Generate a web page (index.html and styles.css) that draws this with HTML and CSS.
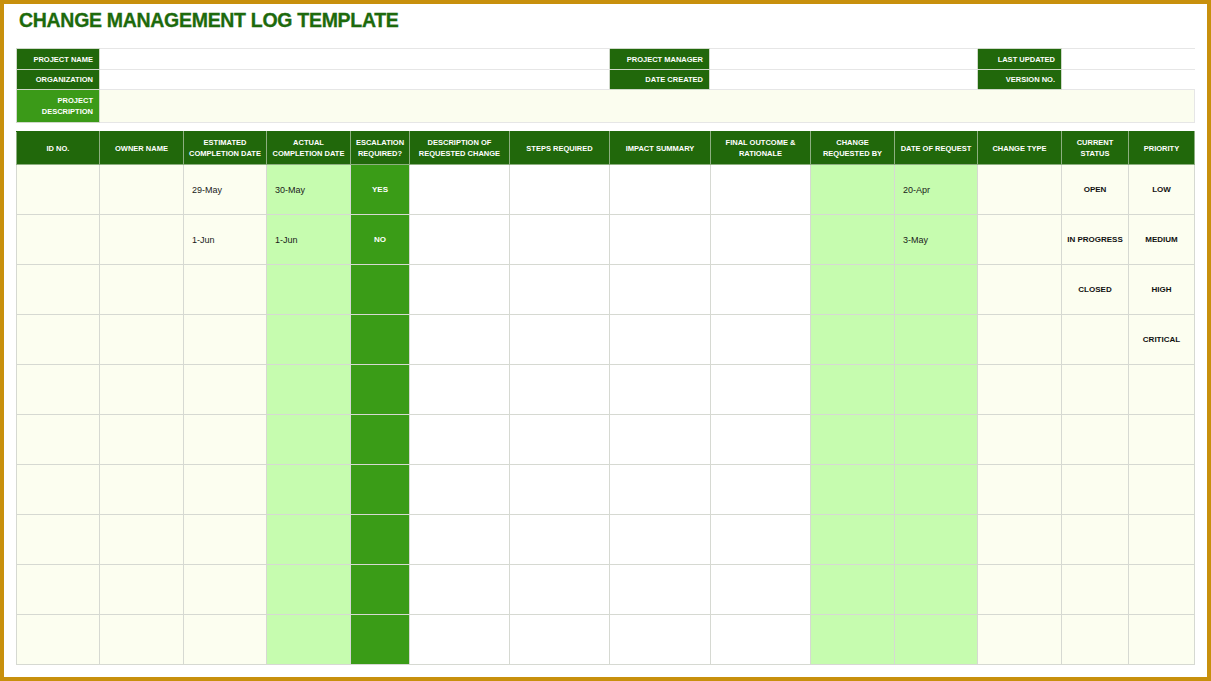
FILE: index.html
```html
<!DOCTYPE html>
<html>
<head>
<meta charset="utf-8">
<link rel="stylesheet" href="styles.css">
</head>
<body>
<div class="page">
  <h1 class="title">CHANGE MANAGEMENT LOG TEMPLATE</h1>

  <table class="info">
    <colgroup>
      <col class="w83"><col class="w510"><col class="w100"><col class="w268"><col class="w84"><col class="w133">
    </colgroup>
    <tr class="r1">
      <th>PROJECT NAME</th><td></td>
      <th>PROJECT MANAGER</th><td></td>
      <th>LAST UPDATED</th><td></td>
    </tr>
    <tr class="r2">
      <th>ORGANIZATION</th><td></td>
      <th>DATE CREATED</th><td></td>
      <th>VERSION NO.</th><td></td>
    </tr>
    <tr class="r3">
      <th class="light">PROJECT<br>DESCRIPTION</th><td colspan="5" class="cream"></td>
    </tr>
  </table>

  <table class="log">
    <colgroup>
      <col class="cream w83">
      <col class="cream w84">
      <col class="cream w83">
      <col class="lgreen w84">
      <col class="green w59">
      <col class="white w100">
      <col class="white w100">
      <col class="white w101">
      <col class="white w100">
      <col class="lgreen w84">
      <col class="lgreen w83">
      <col class="cream w84">
      <col class="cream w67">
      <col class="cream w66">
    </colgroup>
    <thead>
      <tr>
        <th>ID NO.</th>
        <th>OWNER NAME</th>
        <th>ESTIMATED<br>COMPLETION DATE</th>
        <th>ACTUAL<br>COMPLETION DATE</th>
        <th>ESCALATION<br>REQUIRED?</th>
        <th>DESCRIPTION OF<br>REQUESTED CHANGE</th>
        <th>STEPS REQUIRED</th>
        <th>IMPACT SUMMARY</th>
        <th>FINAL OUTCOME &amp;<br>RATIONALE</th>
        <th>CHANGE<br>REQUESTED BY</th>
        <th>DATE OF REQUEST</th>
        <th>CHANGE TYPE</th>
        <th>CURRENT<br>STATUS</th>
        <th>PRIORITY</th>
      </tr>
    </thead>
    <tbody>
      <tr>
        <td></td><td></td><td class="date">29-May</td><td class="date">30-May</td><td class="esc">YES</td>
        <td></td><td></td><td></td><td></td><td></td><td class="date">20-Apr</td><td></td>
        <td class="bold">OPEN</td><td class="bold">LOW</td>
      </tr>
      <tr>
        <td></td><td></td><td class="date">1-Jun</td><td class="date">1-Jun</td><td class="esc">NO</td>
        <td></td><td></td><td></td><td></td><td></td><td class="date">3-May</td><td></td>
        <td class="bold">IN PROGRESS</td><td class="bold">MEDIUM</td>
      </tr>
      <tr>
        <td></td><td></td><td></td><td></td><td></td><td></td><td></td><td></td><td></td><td></td><td></td><td></td>
        <td class="bold">CLOSED</td><td class="bold">HIGH</td>
      </tr>
      <tr>
        <td></td><td></td><td></td><td></td><td></td><td></td><td></td><td></td><td></td><td></td><td></td><td></td>
        <td></td><td class="bold">CRITICAL</td>
      </tr>
      <tr><td></td><td></td><td></td><td></td><td></td><td></td><td></td><td></td><td></td><td></td><td></td><td></td><td></td><td></td></tr>
      <tr><td></td><td></td><td></td><td></td><td></td><td></td><td></td><td></td><td></td><td></td><td></td><td></td><td></td><td></td></tr>
      <tr><td></td><td></td><td></td><td></td><td></td><td></td><td></td><td></td><td></td><td></td><td></td><td></td><td></td><td></td></tr>
      <tr><td></td><td></td><td></td><td></td><td></td><td></td><td></td><td></td><td></td><td></td><td></td><td></td><td></td><td></td></tr>
      <tr><td></td><td></td><td></td><td></td><td></td><td></td><td></td><td></td><td></td><td></td><td></td><td></td><td></td><td></td></tr>
      <tr><td></td><td></td><td></td><td></td><td></td><td></td><td></td><td></td><td></td><td></td><td></td><td></td><td></td><td></td></tr>
    </tbody>
  </table>
</div>
</body>
</html>
```

FILE: styles.css
```css
html, body {
  margin: 0;
  padding: 0;
  background: #ffffff;
}

.page {
  box-sizing: border-box;
  width: 1211px;
  height: 681px;
  border: 4px solid #c8900d;
  padding: 4px 13px 0 12px;
  background: #ffffff;
  font-family: "Liberation Sans", Arial, sans-serif;
  overflow: hidden;
}

.title {
  margin: 0 0 16px 3px;
  height: 24px;
  font-size: 19.5px;
  line-height: 24px;
  font-weight: bold;
  color: #1d6a0c;
  letter-spacing: -0.3px;
  -webkit-text-stroke: 0.3px #1d6a0c;
}

table {
  border-collapse: collapse;
  table-layout: fixed;
  width: 1178px;
}

.w59 { width: 59px; }
.w66 { width: 66px; }
.w67 { width: 67px; }
.w83 { width: 83px; }
.w84 { width: 84px; }
.w100 { width: 100px; }
.w101 { width: 101px; }
.w133 { width: 133px; }
.w268 { width: 268px; }
.w510 { width: 510px; }

.info th {
  background: #21680b;
  color: #ffffff;
  font-size: 7.5px;
  font-weight: bold;
  text-align: right;
  padding: 0 6px 0 0;
  border: 1px solid #cfd8c9;
  line-height: 11px;
}

.info td {
  border: 1px solid #e6e6e6;
  border-left: none;
  border-right: none;
  padding: 0;
}

.info .r1 { height: 21px; }
.info .r2 { height: 20px; }
.info .r3 { height: 33px; }
.info .r3 td { border-top: 1px solid #cfcfcf; border-right: 1px solid #e6e6e6; }
.info th.light { background: #3b9a18; }
.info td.cream { background: #fbfdef; }

.log {
  margin-top: 8px;
}

col.cream { background: #fcfef0; }
col.lgreen { background: #c6fcaf; }
col.green { background: #3a9c17; }
col.white { background: #ffffff; }

.log thead tr { height: 33px; }

.log thead th {
  background: #21680b;
  color: #ffffff;
  font-size: 7.5px;
  font-weight: bold;
  line-height: 11px;
  text-align: center;
  padding: 0 2px;
  border: 1px solid #8daf80;
  border-top-color: #21680b;
}

.log tbody tr { height: 50px; }

.log tbody td {
  border: 1px solid #d6d9d2;
  padding: 0;
  font-size: 9px;
  color: #1a1a1a;
  vertical-align: middle;
}

.log tbody td.date {
  text-align: left;
  padding-left: 8px;
}

.log tbody td.esc {
  text-align: center;
  color: #ffffff;
  font-weight: bold;
  font-size: 8px;
}

.log tbody td.bold {
  text-align: center;
  font-weight: bold;
  font-size: 8px;
  color: #111111;
}
```
